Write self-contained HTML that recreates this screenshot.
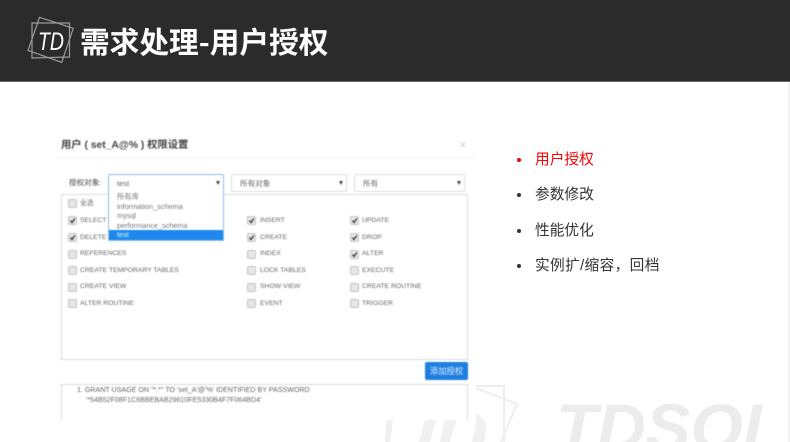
<!DOCTYPE html>
<html><head><meta charset="utf-8">
<style>
html,body{margin:0;padding:0;background:#fff}
#p{position:relative;width:790px;height:442px;overflow:hidden;background:#fff;font-family:"Liberation Sans","Noto Sans CJK SC",sans-serif}
.a{position:absolute;white-space:nowrap}
#hd{left:0;top:0;width:790px;height:81px;background:#2b2b2b;border-bottom:1px solid #6a6a6a}
#title{left:80px;top:20px;font-size:29.7px;line-height:42px;font-weight:700;color:#fff;font-family:"Noto Sans CJK SC","Liberation Sans",sans-serif}
#dlg{left:0;top:0;width:790px;height:420px;overflow:hidden;filter:blur(.4px)}
.sel{position:absolute;top:174px;height:16px;border:1px solid #ddd;border-radius:2px;background:#fff;box-sizing:content-box}
.sel span{position:absolute;left:8px;top:2px;font-size:7.6px;line-height:14px;color:#666}
.sel i{position:absolute;right:3px;top:6px;width:0;height:0;border-left:2.5px solid transparent;border-right:2.5px solid transparent;border-top:4px solid #444}
.cb{position:absolute;width:7px;height:7px;border:1px solid #c4c4c4;border-radius:2px;background:#e6e6e6}
.cb svg{position:absolute;left:0;top:0}
.l{position:absolute;font-size:6.8px;line-height:10px;color:#666;white-space:nowrap;margin-top:1px}
.g{position:absolute;font-size:7.1px;line-height:10px;color:#666;white-space:nowrap}
.o{position:absolute;left:117px;font-size:7.3px;line-height:10px;color:#777;white-space:nowrap}
.li{position:absolute;left:535px;font-size:14.7px;line-height:20px;color:#333;white-space:nowrap;font-family:"Liberation Sans","Noto Sans CJK SC",sans-serif}
.b{position:absolute;left:517px;width:4px;height:4px;border-radius:50%;background:#333}
</style></head>
<body><div id="p">

<svg class="a" style="left:380px;top:380px" width="410" height="62" viewBox="380 380 410 62">
<g fill="none" stroke="#eeeeee" stroke-width="2">
<path d="M476 386H504V442"/>
<path d="M476 388L517 404L501 442"/>
</g>
<g fill="#f0f0f0">
<path d="M386 420H393L390 442H385Z"/>
<path d="M425 420H436L430 442H419Z"/>
<path d="M445 420H456L450 442H440Z"/>
<path d="M476 413Q487 420 486 430L484 442H472L476 425Z"/>
</g>
<text x="556" y="450" font-family="Liberation Sans" font-weight="700" font-style="italic" font-size="66" fill="#ececec" textLength="228" lengthAdjust="spacingAndGlyphs">TDSQL</text>
</svg>

<div id="dlg" class="a">
<div class="a" style="left:61px;top:139px;font-size:10.3px;line-height:14px;font-weight:700;color:#444">用户 ( set_A@% ) 权限设置</div>
<div class="a" style="left:459px;top:138px;font-size:13px;line-height:14px;color:#d0d0d0">×</div>
<div class="a" style="left:55px;top:157px;width:420px;height:1px;background:#f2f2f2"></div>

<div class="a" style="left:69px;top:178px;font-size:7.6px;line-height:10px;color:#444">授权对象:</div>
<div class="sel" style="left:108px;width:114px;border-color:#8fbde9"><span>test</span><i></i></div>
<div class="sel" style="left:231px;width:114px"><span>所有对象</span><i></i></div>
<div class="sel" style="left:354px;width:109px"><span>所有</span><i></i></div>

<div class="a" style="left:61px;top:194px;width:405px;height:164px;border:1px solid #dedede"></div>

<div class="cb" style="left:68px;top:199px"></div><div class="l" style="left:80px;top:198px">全选</div>

<div class="cb" style="left:68px;top:216px"><svg width="7" height="7"><path d="M1.5 3.5L3 5.5L5.8 1.5" fill="none" stroke="#333" stroke-width="1.3"/></svg></div><div class="l" style="left:80px;top:215px">SELECT</div>
<div class="cb" style="left:68px;top:233px"><svg width="7" height="7"><path d="M1.5 3.5L3 5.5L5.8 1.5" fill="none" stroke="#333" stroke-width="1.3"/></svg></div><div class="l" style="left:80px;top:232px">DELETE</div>
<div class="cb" style="left:68px;top:250px"></div><div class="l" style="left:80px;top:248px">REFERENCES</div>
<div class="cb" style="left:68px;top:266px"></div><div class="l" style="left:80px;top:265px">CREATE TEMPORARY TABLES</div>
<div class="cb" style="left:68px;top:283px"></div><div class="l" style="left:80px;top:281px">CREATE VIEW</div>
<div class="cb" style="left:68px;top:299px"></div><div class="l" style="left:80px;top:298px">ALTER ROUTINE</div>

<div class="cb" style="left:247px;top:216px"><svg width="7" height="7"><path d="M1.5 3.5L3 5.5L5.8 1.5" fill="none" stroke="#333" stroke-width="1.3"/></svg></div><div class="l" style="left:260px;top:215px">INSERT</div>
<div class="cb" style="left:247px;top:233px"><svg width="7" height="7"><path d="M1.5 3.5L3 5.5L5.8 1.5" fill="none" stroke="#333" stroke-width="1.3"/></svg></div><div class="l" style="left:260px;top:232px">CREATE</div>
<div class="cb" style="left:247px;top:250px"></div><div class="l" style="left:260px;top:248px">INDEX</div>
<div class="cb" style="left:247px;top:266px"></div><div class="l" style="left:260px;top:265px">LOCK TABLES</div>
<div class="cb" style="left:247px;top:283px"></div><div class="l" style="left:260px;top:281px">SHOW VIEW</div>
<div class="cb" style="left:247px;top:299px"></div><div class="l" style="left:260px;top:298px">EVENT</div>

<div class="cb" style="left:350px;top:216px"><svg width="7" height="7"><path d="M1.5 3.5L3 5.5L5.8 1.5" fill="none" stroke="#333" stroke-width="1.3"/></svg></div><div class="l" style="left:362px;top:215px">UPDATE</div>
<div class="cb" style="left:350px;top:233px"><svg width="7" height="7"><path d="M1.5 3.5L3 5.5L5.8 1.5" fill="none" stroke="#333" stroke-width="1.3"/></svg></div><div class="l" style="left:362px;top:232px">DROP</div>
<div class="cb" style="left:350px;top:250px"><svg width="7" height="7"><path d="M1.5 3.5L3 5.5L5.8 1.5" fill="none" stroke="#333" stroke-width="1.3"/></svg></div><div class="l" style="left:362px;top:248px">ALTER</div>
<div class="cb" style="left:350px;top:266px"></div><div class="l" style="left:362px;top:265px">EXECUTE</div>
<div class="cb" style="left:350px;top:283px"></div><div class="l" style="left:362px;top:281px">CREATE ROUTINE</div>
<div class="cb" style="left:350px;top:299px"></div><div class="l" style="left:362px;top:298px">TRIGGER</div>

<div class="a" style="left:108px;top:191px;width:114px;height:49px;background:#fff;border:1px solid #8fbde9;border-top:0"></div>
<div class="o" style="top:192px">所有库</div>
<div class="o" style="top:202px">information_schema</div>
<div class="o" style="top:211px">mysql</div>
<div class="o" style="top:221px">performance_schema</div>
<div class="a" style="left:109px;top:230px;width:114px;height:10px;background:#1e88ee"></div>
<div class="o" style="top:230px;color:#dff">test</div>

<div class="a" style="left:425px;top:362px;width:43px;height:18px;background:#1f7fe0;border-radius:2px;color:#dcecff;font-size:8.3px;line-height:18px;text-align:center">添加授权</div>

<div class="a" style="left:61px;top:384px;width:405px;height:50px;border:1px solid #dedede"></div>
<div class="g" style="left:77px;top:385px">1. GRANT USAGE ON "*.*" TO 'set_A'@'%' IDENTIFIED BY PASSWORD</div>
<div class="g" style="left:86px;top:395px">'*54B52F08F1C6BBEBAB29610FE5330B4F7F064BD4'</div>
</div>

<div class="b" style="top:158px;background:#f00"></div>
<div class="li" style="top:150px;color:#f00">用户授权</div>
<div class="b" style="top:193px"></div>
<div class="li" style="top:185px">参数修改</div>
<div class="b" style="top:229px"></div>
<div class="li" style="top:221px">性能优化</div>
<div class="b" style="top:264px"></div>
<div class="li" style="top:256px;letter-spacing:.35px">实例扩/缩容，回档</div>

<div id="hd" class="a"></div>
<svg class="a" style="left:0;top:0" width="80" height="81" viewBox="0 0 80 81">
<g fill="none" stroke="#9a9a9a" stroke-width="1.2">
<path d="M32 23H69.5V57L32 58Z"/>
<path d="M39.5 17.3L73.3 28.3L61.7 62.3L28 50.5Z"/>
</g>
<text x="38" y="50" font-family="Liberation Sans" font-style="italic" font-size="25" fill="#fff" textLength="26" lengthAdjust="spacingAndGlyphs">TD</text>
</svg>
<div id="title" class="a">需求处理-用户授权</div>

<div class="a" style="left:788px;top:82px;width:2px;height:360px;background:#f4f4f4"></div>
</div></body></html>
